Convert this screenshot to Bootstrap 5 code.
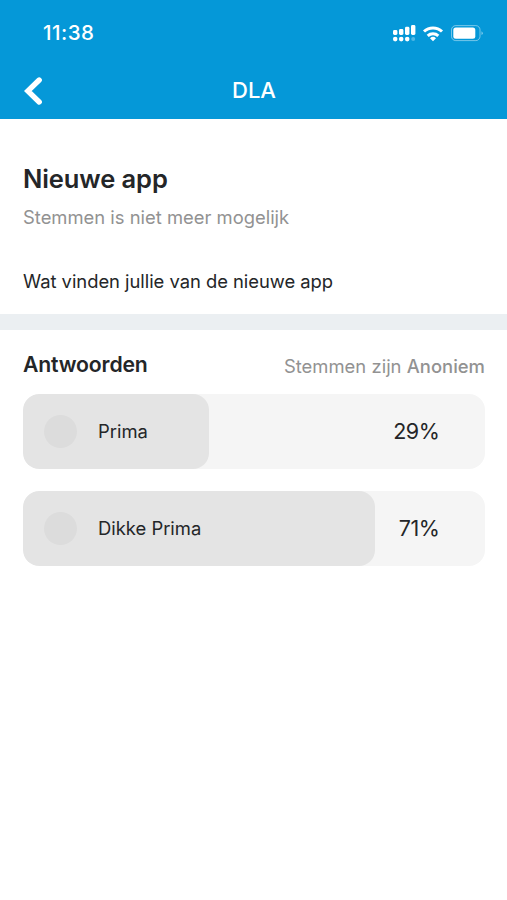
<!DOCTYPE html>
<html lang="nl">
<head>
<meta charset="utf-8">
<meta name="viewport" content="width=device-width, initial-scale=1">
<title>DLA</title>
<link href="https://cdn.jsdelivr.net/npm/bootstrap@5.3.0/dist/css/bootstrap.min.css" rel="stylesheet">
<style>
body{font-family:Inter,"Liberation Sans",sans-serif;color:#242628;background:#fff;min-height:100vh;overflow:hidden}
.app-header{background:#0598d8;height:119px;color:#fff}
.status-row{height:62px;padding:4px 24px 0 43px}
.clock{font-size:20.5px;line-height:24px;font-weight:500;letter-spacing:.5px}
.title-row{height:57px;padding:0 23px 0 24px;display:grid;grid-template-columns:1fr auto 1fr}
.screen-title{font-size:22px;line-height:28px;font-weight:500;letter-spacing:0;padding-bottom:2px}
.intro{height:194.5px;padding:42.5px 23px 0}
.poll-title{font-size:25.5px;line-height:34px;font-weight:600;letter-spacing:-.1px}
.muted-text{color:#929292;font-size:18.4px;line-height:24px}
.status-text{margin-top:9px}
.question{font-size:18.4px;line-height:24px;margin-top:40px;letter-spacing:-.03px}
.divider{height:16px;background:#ebeff2}
.answers{padding:19.5px 22px 0 23px}
.answers-head{height:30px;margin-bottom:14px}
.answers-title{font-size:21.2px;line-height:30px;font-weight:600;letter-spacing:-.15px}
.vote-note{padding-top:3px;letter-spacing:.03px}
.options{padding-top:.8px}
.option{height:75px;border-radius:16px;background:#f5f5f5;margin-bottom:22px;padding:0 45.5px 0 21px;overflow:hidden}
.option-fill{border-radius:16px;background:#e4e4e4}
.dot{width:33px;height:33px;border-radius:50%;background:#dcdcdc;margin-right:21px}
.option-label{font-size:18.4px;padding-top:1.4px}
.option-value{font-size:21.5px;letter-spacing:-.4px}
.text-line{white-space:nowrap;width:max-content}
</style>
</head>
<body>
<header class="app-header">
  <div class="status-row d-flex align-items-center justify-content-between">
    <span class="clock">11:38</span>
    <span class="d-flex align-items-center">
      <svg width="91" height="20" viewBox="392 23 91 20" fill="#fff" aria-hidden="true">
        <rect x="393" y="30" width="4.4" height="5" rx="1.4"/><rect x="399" y="29" width="4.4" height="6" rx="1.4"/><rect x="405" y="26.800" width="4.4" height="8.200" rx="1.4"/><rect x="411" y="25" width="4.4" height="10" rx="1.4"/>
        <circle cx="395.200" cy="39.100" r="2.300"/><circle cx="401.200" cy="39.100" r="2.300"/><circle cx="407.200" cy="39.100" r="2.300"/><circle cx="413.200" cy="39.100" r="2" opacity=".3"/>
        <g fill="none" stroke="#fff" stroke-width="3"><path d="M424 31.500a13 13 0 0 1 18 0"/><path d="M427.700 35.800a7.800 7.800 0 0 1 10.600 0"/></g>
        <path d="M430 38.200a4.500 4.500 0 0 1 6 0l-3 3z"/>
        <rect x="451.500" y="25.600" width="28.500" height="15" rx="4.200" fill="none" stroke="#fff" stroke-opacity=".45"/>
        <rect x="453.300" y="27.500" width="22" height="11.200" rx="2.500"/>
        <path d="M481.500 31.200q2.600 1.900 0 3.900z" opacity=".5"/>
      </svg>
    </span>
  </div>
  <nav class="title-row align-items-center">
    <a href="#" class="d-flex" aria-label="Terug"><svg width="20" height="30" viewBox="0 0 20 30" fill="none" stroke="#fff" stroke-width="5.400" stroke-linecap="round" stroke-linejoin="miter"><path d="M15.200 4 3.800 15l11.400 11"/></svg></a>
    <h1 class="screen-title mb-0">DLA</h1>
  </nav>
</header>
<main>
  <section class="intro">
    <h2 class="poll-title text-line mb-0">Nieuwe app</h2>
    <p class="muted-text text-line mb-0 status-text">Stemmen is niet meer mogelijk</p>
    <p class="question text-line mb-0">Wat vinden jullie van de nieuwe app</p>
  </section>
  <div class="divider"></div>
  <section class="answers">
    <div class="d-flex justify-content-between align-items-center answers-head">
      <h3 class="answers-title text-line mb-0">Antwoorden</h3>
      <span class="muted-text text-line vote-note">Stemmen zijn <span class="fw-medium">Anoniem</span></span>
    </div>
    <div class="options">
      <div class="option position-relative d-flex align-items-center">
        <div class="option-fill position-absolute top-0 bottom-0 start-0" style="width:40.2%"></div>
        <span class="dot position-relative"></span>
        <span class="option-label position-relative">Prima</span>
        <span class="option-value position-relative ms-auto">29%</span>
      </div>
      <div class="option position-relative d-flex align-items-center">
        <div class="option-fill position-absolute top-0 bottom-0 start-0" style="width:76.2%"></div>
        <span class="dot position-relative"></span>
        <span class="option-label position-relative">Dikke Prima</span>
        <span class="option-value position-relative ms-auto">71%</span>
      </div>
    </div>
  </section>
</main>
<script src="https://cdn.jsdelivr.net/npm/bootstrap@5.3.0/dist/js/bootstrap.bundle.min.js"></script>
</body>
</html>
